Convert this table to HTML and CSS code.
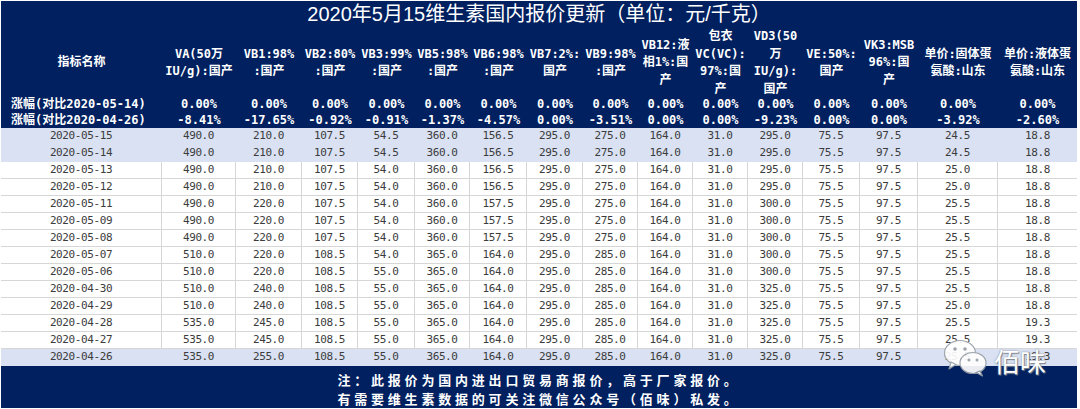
FILE: index.html
```html
<!DOCTYPE html>
<html lang="zh-CN">
<head>
<meta charset="utf-8">
<title>2020年5月15维生素国内报价更新</title>
<link rel="stylesheet" href="styles.css">
</head>
<body>
<div class="sheet">
  <div class="title">2020年5月15维生素国内报价更新（单位：元/千克）</div>
  <div class="row hdr">
    <div class="c">指标名称</div>
    <div class="c">VA(50万<br>IU/g):国产</div>
    <div class="c">VB1:98%<br>:国产</div>
    <div class="c">VB2:80%<br>:国产</div>
    <div class="c">VB3:99%<br>:国产</div>
    <div class="c">VB5:98%<br>:国产</div>
    <div class="c">VB6:98%<br>:国产</div>
    <div class="c">VB7:2%:<br>国产</div>
    <div class="c">VB9:98%<br>:国产</div>
    <div class="c">VB12:液<br>相1%:国<br>产</div>
    <div class="c">包衣<br>VC(VC):<br>97%:国<br>产</div>
    <div class="c">VD3(50<br>万<br>IU/g):<br>国产</div>
    <div class="c">VE:50%:<br>国产</div>
    <div class="c">VK3:MSB<br>96%:国<br>产</div>
    <div class="c">单价:固体蛋<br>氨酸:山东</div>
    <div class="c">单价:液体蛋<br>氨酸:山东</div>
  </div>
  <div class="row chg">
    <div class="c lbl">涨幅(对比2020-05-14)</div>
    <div class="c">0.00%</div><div class="c">0.00%</div><div class="c">0.00%</div><div class="c">0.00%</div><div class="c">0.00%</div><div class="c">0.00%</div><div class="c">0.00%</div><div class="c">0.00%</div><div class="c">0.00%</div><div class="c">0.00%</div><div class="c">0.00%</div><div class="c">0.00%</div><div class="c">0.00%</div><div class="c">0.00%</div><div class="c">0.00%</div>
  </div>
  <div class="row chg">
    <div class="c lbl">涨幅(对比2020-04-26)</div>
    <div class="c">-8.41%</div><div class="c">-17.65%</div><div class="c">-0.92%</div><div class="c">-0.91%</div><div class="c">-1.37%</div><div class="c">-4.57%</div><div class="c">0.00%</div><div class="c">-3.51%</div><div class="c">0.00%</div><div class="c">0.00%</div><div class="c">-9.23%</div><div class="c">0.00%</div><div class="c">0.00%</div><div class="c">-3.92%</div><div class="c">-2.60%</div>
  </div>
  <div class="body">
    <div class="row d hl"><div class="c">2020-05-15</div><div class="c">490.0</div><div class="c">210.0</div><div class="c">107.5</div><div class="c">54.5</div><div class="c">360.0</div><div class="c">156.5</div><div class="c">295.0</div><div class="c">275.0</div><div class="c">164.0</div><div class="c">31.0</div><div class="c">295.0</div><div class="c">75.5</div><div class="c">97.5</div><div class="c">24.5</div><div class="c">18.8</div></div>
    <div class="row d hl"><div class="c">2020-05-14</div><div class="c">490.0</div><div class="c">210.0</div><div class="c">107.5</div><div class="c">54.5</div><div class="c">360.0</div><div class="c">156.5</div><div class="c">295.0</div><div class="c">275.0</div><div class="c">164.0</div><div class="c">31.0</div><div class="c">295.0</div><div class="c">75.5</div><div class="c">97.5</div><div class="c">24.5</div><div class="c">18.8</div></div>
    <div class="row d"><div class="c">2020-05-13</div><div class="c">490.0</div><div class="c">210.0</div><div class="c">107.5</div><div class="c">54.0</div><div class="c">360.0</div><div class="c">156.5</div><div class="c">295.0</div><div class="c">275.0</div><div class="c">164.0</div><div class="c">31.0</div><div class="c">295.0</div><div class="c">75.5</div><div class="c">97.5</div><div class="c">25.0</div><div class="c">18.8</div></div>
    <div class="row d"><div class="c">2020-05-12</div><div class="c">490.0</div><div class="c">210.0</div><div class="c">107.5</div><div class="c">54.0</div><div class="c">360.0</div><div class="c">156.5</div><div class="c">295.0</div><div class="c">275.0</div><div class="c">164.0</div><div class="c">31.0</div><div class="c">295.0</div><div class="c">75.5</div><div class="c">97.5</div><div class="c">25.0</div><div class="c">18.8</div></div>
    <div class="row d"><div class="c">2020-05-11</div><div class="c">490.0</div><div class="c">220.0</div><div class="c">107.5</div><div class="c">54.0</div><div class="c">360.0</div><div class="c">157.5</div><div class="c">295.0</div><div class="c">275.0</div><div class="c">164.0</div><div class="c">31.0</div><div class="c">300.0</div><div class="c">75.5</div><div class="c">97.5</div><div class="c">25.5</div><div class="c">18.8</div></div>
    <div class="row d"><div class="c">2020-05-09</div><div class="c">490.0</div><div class="c">220.0</div><div class="c">107.5</div><div class="c">54.0</div><div class="c">360.0</div><div class="c">157.5</div><div class="c">295.0</div><div class="c">275.0</div><div class="c">164.0</div><div class="c">31.0</div><div class="c">300.0</div><div class="c">75.5</div><div class="c">97.5</div><div class="c">25.5</div><div class="c">18.8</div></div>
    <div class="row d"><div class="c">2020-05-08</div><div class="c">490.0</div><div class="c">220.0</div><div class="c">107.5</div><div class="c">54.0</div><div class="c">360.0</div><div class="c">157.5</div><div class="c">295.0</div><div class="c">275.0</div><div class="c">164.0</div><div class="c">31.0</div><div class="c">300.0</div><div class="c">75.5</div><div class="c">97.5</div><div class="c">25.5</div><div class="c">18.8</div></div>
    <div class="row d"><div class="c">2020-05-07</div><div class="c">510.0</div><div class="c">220.0</div><div class="c">108.5</div><div class="c">54.0</div><div class="c">365.0</div><div class="c">164.0</div><div class="c">295.0</div><div class="c">285.0</div><div class="c">164.0</div><div class="c">31.0</div><div class="c">300.0</div><div class="c">75.5</div><div class="c">97.5</div><div class="c">25.5</div><div class="c">18.8</div></div>
    <div class="row d"><div class="c">2020-05-06</div><div class="c">510.0</div><div class="c">220.0</div><div class="c">108.5</div><div class="c">55.0</div><div class="c">365.0</div><div class="c">164.0</div><div class="c">295.0</div><div class="c">285.0</div><div class="c">164.0</div><div class="c">31.0</div><div class="c">300.0</div><div class="c">75.5</div><div class="c">97.5</div><div class="c">25.5</div><div class="c">18.8</div></div>
    <div class="row d"><div class="c">2020-04-30</div><div class="c">510.0</div><div class="c">240.0</div><div class="c">108.5</div><div class="c">55.0</div><div class="c">365.0</div><div class="c">164.0</div><div class="c">295.0</div><div class="c">285.0</div><div class="c">164.0</div><div class="c">31.0</div><div class="c">325.0</div><div class="c">75.5</div><div class="c">97.5</div><div class="c">25.5</div><div class="c">18.8</div></div>
    <div class="row d"><div class="c">2020-04-29</div><div class="c">510.0</div><div class="c">240.0</div><div class="c">108.5</div><div class="c">55.0</div><div class="c">365.0</div><div class="c">164.0</div><div class="c">295.0</div><div class="c">285.0</div><div class="c">164.0</div><div class="c">31.0</div><div class="c">325.0</div><div class="c">75.5</div><div class="c">97.5</div><div class="c">25.0</div><div class="c">18.8</div></div>
    <div class="row d"><div class="c">2020-04-28</div><div class="c">535.0</div><div class="c">245.0</div><div class="c">108.5</div><div class="c">55.0</div><div class="c">365.0</div><div class="c">164.0</div><div class="c">295.0</div><div class="c">285.0</div><div class="c">164.0</div><div class="c">31.0</div><div class="c">325.0</div><div class="c">75.5</div><div class="c">97.5</div><div class="c">25.5</div><div class="c">19.3</div></div>
    <div class="row d"><div class="c">2020-04-27</div><div class="c">535.0</div><div class="c">245.0</div><div class="c">108.5</div><div class="c">55.0</div><div class="c">365.0</div><div class="c">164.0</div><div class="c">295.0</div><div class="c">285.0</div><div class="c">164.0</div><div class="c">31.0</div><div class="c">325.0</div><div class="c">75.5</div><div class="c">97.5</div><div class="c">25.5</div><div class="c">19.3</div></div>
    <div class="row d hl"><div class="c">2020-04-26</div><div class="c">535.0</div><div class="c">255.0</div><div class="c">108.5</div><div class="c">55.0</div><div class="c">365.0</div><div class="c">164.0</div><div class="c">295.0</div><div class="c">285.0</div><div class="c">164.0</div><div class="c">31.0</div><div class="c">325.0</div><div class="c">75.5</div><div class="c">97.5</div><div class="c">25.5</div><div class="c">19.3</div></div>
  </div>
  <div class="foot">
    <div>注：此报价为国内进出口贸易商报价，高于厂家报价。</div>
    <div>有需要维生素数据的可关注微信公众号（佰味）私发。</div>
  </div>
  <div class="wm">
    <svg class="wm-icon" width="46" height="38" viewBox="0 0 46 38">
      <ellipse cx="17" cy="14" rx="15.5" ry="12.5" fill="#ffffff" stroke="#9aa0a8" stroke-width="1.2"/>
      <path d="M8 23 L6 30 L13 25.5 Z" fill="#ffffff" stroke="#9aa0a8" stroke-width="1.2" stroke-linejoin="round"/>
      <circle cx="12" cy="10" r="1.8" fill="#9aa0a8"/>
      <circle cx="22" cy="10" r="1.8" fill="#9aa0a8"/>
      <ellipse cx="30" cy="24" rx="13" ry="10.5" fill="#ffffff" stroke="#9aa0a8" stroke-width="1.2"/>
      <path d="M37 32 L39.5 37 L33 33.5 Z" fill="#ffffff" stroke="#9aa0a8" stroke-width="1.2" stroke-linejoin="round"/>
      <circle cx="26" cy="21" r="1.5" fill="#9aa0a8"/>
      <circle cx="34" cy="21" r="1.5" fill="#9aa0a8"/>
    </svg>
    <span class="wm-text">佰味</span>
  </div>
</div>
</body>
</html>
```
FILE: styles.css
```css
html, body {
  margin: 0;
  padding: 0;
  background: #ffffff;
}

.sheet {
  position: relative;
  width: 1076px;
  margin: 1px 0 0 1px;
  background: #002060;
  color: #ffffff;
}

.title {
  height: 27px;
  line-height: 27px;
  text-align: center;
  font-family: "Liberation Sans", "Noto Sans CJK SC", sans-serif;
  font-size: 20px;
}

.row {
  display: grid;
  grid-template-columns: 161px 74px 66px 56px 57px 55px 57px 56px 55px 55px 55px 55px 57px 58px 80px 79px;
}

.c {
  display: flex;
  align-items: center;
  justify-content: center;
  text-align: center;
  white-space: nowrap;
  box-sizing: border-box;
}

.hdr {
  height: 68px;
}

.hdr .c,
.chg .c {
  font-family: "DejaVu Sans Mono", "Noto Sans CJK SC", monospace;
  font-size: 12px;
  font-weight: bold;
  line-height: 17.5px;
}

.chg {
  height: 16px;
}

.chg .c {
  line-height: 16px;
}

.chg .lbl {
  justify-content: flex-start;
  padding-left: 10px;
}

.body {
  background: #ffffff;
}

.d {
  height: 17px;
}

.d .c {
  font-family: "DejaVu Sans Mono", monospace;
  font-size: 11px;
  letter-spacing: -0.4px;
  color: #3c3c3c;
  line-height: 16px;
  border-right: 1px solid #d6d6d6;
  border-bottom: 1px solid #d6d6d6;
}

.d .c:last-child {
  border-right: none;
}

.d.hl {
  background: #d9e1f2;
}

.d.hl .c {
  border-color: #d9e1f2;
}

.foot {
  height: 42px;
  padding-top: 4px;
  box-sizing: border-box;
  text-align: center;
  font-family: "Noto Sans CJK SC", sans-serif;
  font-size: 13px;
  font-weight: bold;
  letter-spacing: 3.8px;
  line-height: 19px;
}

.wm {
  position: absolute;
  left: 942px;
  top: 338px;
  display: flex;
  align-items: center;
  gap: 5px;
}

.wm-icon {
  display: block;
  opacity: 0.92;
}

.wm-text {
  font-family: "Noto Sans CJK SC", sans-serif;
  font-size: 26px;
  line-height: 30px;
  color: #ffffff;
  text-shadow: 0 0 2px #7d8590, 1px 1px 1px #7d8590;
  margin-top: 6px;
}
```
